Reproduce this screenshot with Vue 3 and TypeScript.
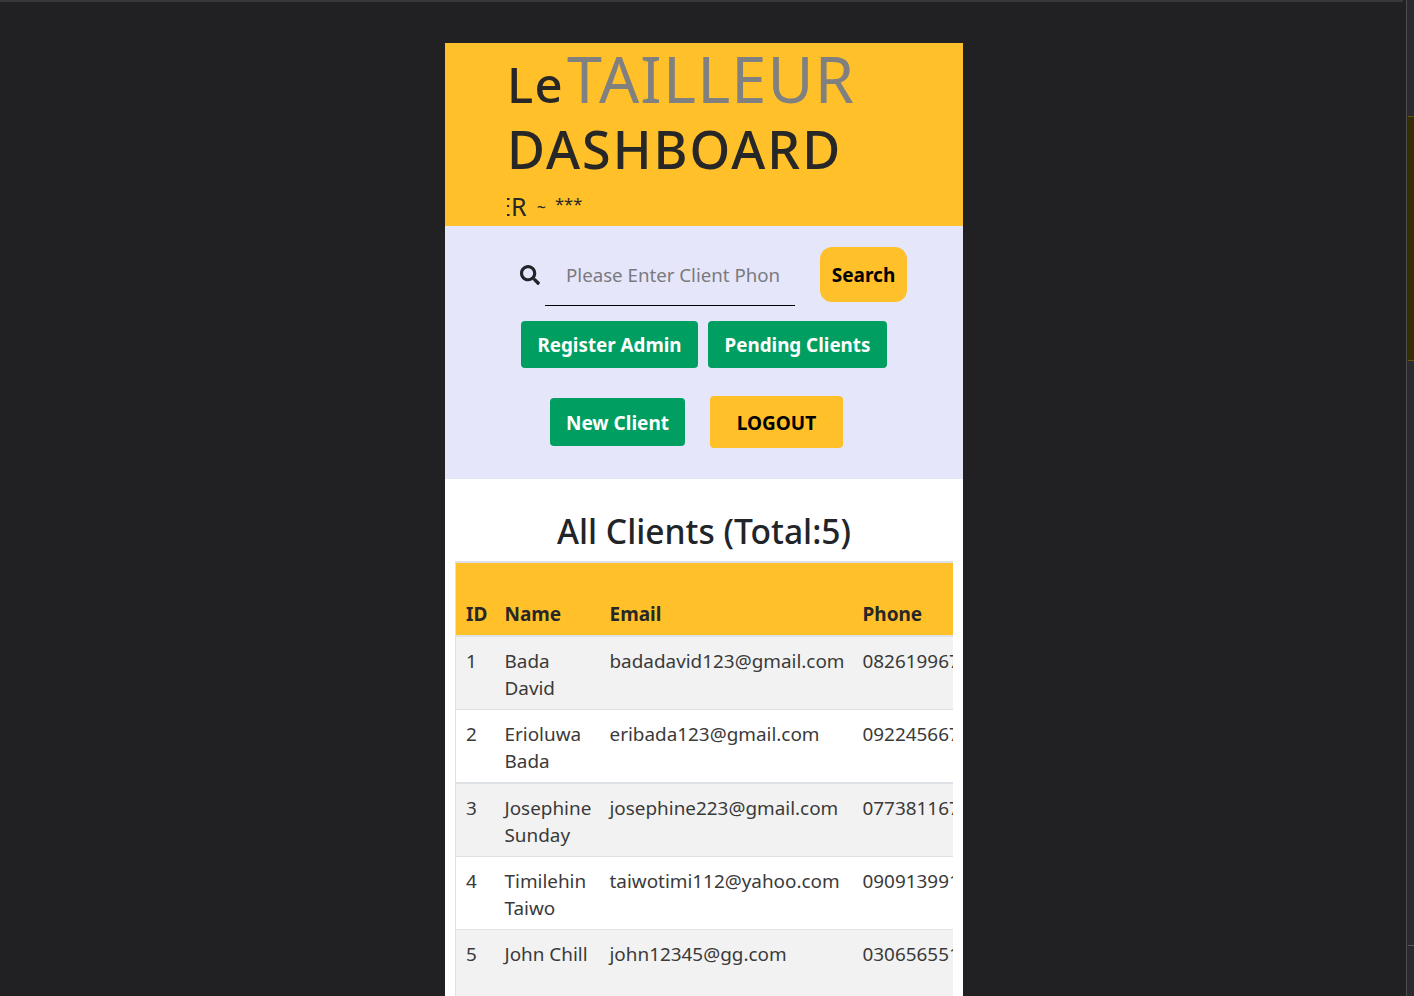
<script setup lang="ts">
type Client = {
  id: number
  first: string
  last: string
  email: string
  phone: string
}

const clients: Client[] = [
  { id: 1, first: 'Bada', last: 'David', email: 'badadavid123@gmail.com', phone: '08261996712' },
  { id: 2, first: 'Erioluwa', last: 'Bada', email: 'eribada123@gmail.com', phone: '09224566712' },
  { id: 3, first: 'Josephine', last: 'Sunday', email: 'josephine223@gmail.com', phone: '07738116712' },
  { id: 4, first: 'Timilehin', last: 'Taiwo', email: 'taiwotimi112@yahoo.com', phone: '09091399112' },
  { id: 5, first: 'John Chill', last: '', email: 'john12345@gg.com', phone: '03065655112' }
]
</script>

<template>
  <div class="page">
    <div class="topline"></div>
    <div class="rail">
      <div class="rail-mark"></div>
      <div class="rail-tick"></div>
    </div>
    <main class="panel">
      <header class="brand">
        <h1 class="logo"><span class="le">Le</span><span class="tailleur">TAILLEUR</span></h1>
        <h2 class="dash">DASHBOARD</h2>
        <div class="ticker"><span class="er">ER</span> <span class="tilde">~</span> <span class="stars">***</span></div>
      </header>

      <section class="actions">
        <div class="search-row">
          <svg class="search-icon" viewBox="0 0 512 512" aria-hidden="true">
            <path d="M505 442.7L405.3 343c-4.5-4.5-10.6-7-17-7H372c27.6-35.3 44-79.7 44-128C416 93.1 322.9 0 208 0S0 93.1 0 208s93.1 208 208 208c48.3 0 92.7-16.4 128-44v16.3c0 6.4 2.5 12.5 7 17l99.7 99.7c9.4 9.4 24.6 9.4 33.9 0l28.3-28.3c9.4-9.4 9.4-24.6.1-34zM208 336c-70.7 0-128-57.2-128-128 0-70.7 57.2-128 128-128 70.7 0 128 57.2 128 128 0 70.7-57.2 128-128 128z" />
          </svg>
          <input class="search-input" type="text" placeholder="Please Enter Client Phone Number" />
          <button class="search-btn" type="button">Search</button>
        </div>
        <div class="btn-row">
          <button class="btn green reg" type="button">Register Admin</button>
          <button class="btn green pend" type="button">Pending Clients</button>
        </div>
        <div class="btn-row last">
          <button class="btn green new" type="button">New Client</button>
          <button class="btn gold logout" type="button">LOGOUT</button>
        </div>
      </section>

      <section class="clients">
        <h3 class="title">All Clients (Total:5)</h3>
        <div class="table-wrap">
          <table class="table">
            <colgroup>
              <col class="c-id" />
              <col class="c-name" />
              <col class="c-email" />
              <col class="c-phone" />
            </colgroup>
            <thead>
              <tr>
                <th>ID</th>
                <th>Name</th>
                <th>Email</th>
                <th>Phone</th>
              </tr>
            </thead>
            <tbody>
              <tr v-for="c in clients" :key="c.id">
                <td>{{ c.id }}</td>
                <td>{{ c.first }}<br v-if="c.last" />{{ c.last }}</td>
                <td>{{ c.email }}</td>
                <td>{{ c.phone }}</td>
              </tr>
            </tbody>
          </table>
        </div>
      </section>
    </main>
  </div>
</template>

<style>
html,
body {
  margin: 0;
  height: 100%;
  overflow: hidden;
  background: #212123;
}
</style>

<style scoped>
.page {
  position: relative;
  height: 996px;
  overflow: hidden;
  background: #212123;
  font-family: "Noto Sans", "Open Sans", sans-serif;
  color: #212529;
}

.topline {
  height: 2px;
  width: 1403px;
  background: #38393b;
}

.rail {
  position: absolute;
  top: 0;
  right: 0;
  width: 7px;
  height: 996px;
  background: #2a2b2f;
  border-left: 1px solid #4a4b4d;
}

.rail-mark {
  position: absolute;
  top: 116px;
  left: 1px;
  right: 0;
  height: 245px;
  background: #352d05;
  border-top: 1px solid #665410;
  border-bottom: 1px solid #665410;
  box-sizing: border-box;
}

.rail-tick {
  position: absolute;
  top: 945px;
  left: 1px;
  right: 0;
  height: 1px;
  background: #55565a;
}

.panel {
  width: 518px;
  margin: 41px 0 0 445px;
  background: #fff;
}

.brand {
  height: 183px;
  box-sizing: border-box;
  padding-left: 62px;
  background: #ffc02a;
  overflow: hidden;
  color: #272727;
}

.logo {
  margin: 0;
  height: 70px;
  display: flex;
  align-items: baseline;
  font-weight: 500;
  white-space: nowrap;
}

.le {
  font-size: 49px;
  line-height: 72px;
  letter-spacing: 1.4px;
  margin-right: 3px;
}

.tailleur {
  font-size: 63px;
  line-height: 72px;
  font-weight: 400;
  letter-spacing: 1.2px;
  color: #808080;
}

.dash {
  margin: 0;
  height: 80px;
  font-size: 52px;
  line-height: 72px;
  font-weight: 500;
  letter-spacing: 2px;
}

.ticker {
  width: 90px;
  overflow: hidden;
  line-height: 26px;
  white-space: nowrap;
}

.er {
  display: inline-block;
  margin-left: -10px;
  font-size: 25px;
}

.tilde {
  display: inline-block;
  margin-left: 6px;
  font-size: 16px;
  transform: translateY(-3px);
}

.stars {
  display: inline-block;
  margin-left: 5px;
  font-size: 16.5px;
  transform: translateY(-6px);
}

.actions {
  height: 253px;
  box-sizing: border-box;
  padding-top: 21px;
  background: #e6e6fa;
}

.search-row {
  display: flex;
  align-items: flex-start;
  padding-left: 75px;
}

.search-icon {
  width: 20px;
  height: 20px;
  margin-top: 18px;
  fill: #212529;
}

.search-input {
  width: 250px;
  height: 59px;
  box-sizing: border-box;
  margin-left: 5px;
  padding: 0 15px 4px 21px;
  border: 0;
  border-bottom: 1px solid #000;
  background: transparent;
  font: 400 18.7px "Noto Sans", sans-serif;
  color: #212529;
  outline: none;
}

.search-input::placeholder {
  color: #7a7a80;
  opacity: 1;
}

.search-btn {
  width: 87px;
  height: 55px;
  margin-left: 25px;
  padding: 0;
  border: 0;
  border-radius: 12px;
  background: #ffc02a;
  color: #000;
  font: 700 19px "Noto Sans", sans-serif;
}

.btn-row {
  display: flex;
  justify-content: center;
  gap: 10px;
  margin-top: 15px;
}

.btn-row.last {
  align-items: center;
  gap: 25px;
  margin-top: 28px;
  padding-right: 15px;
}

.btn {
  padding: 0;
  border: 0;
  border-radius: 4px;
  font: 700 19px "Noto Sans", sans-serif;
}

.green {
  background: #009e60;
  color: #fff;
}

.gold {
  background: #ffc02a;
  color: #000;
}

.reg {
  width: 177px;
  height: 47px;
  font-size: 18.8px;
}

.pend {
  width: 179px;
  height: 47px;
  font-size: 18.8px;
}

.new {
  width: 135px;
  height: 48px;
  padding-top: 2px;
}

.logout {
  width: 133px;
  height: 52px;
  padding-top: 2px;
}

.clients {
  padding: 0 10px;
}

.title {
  margin: 0;
  height: 82px;
  box-sizing: border-box;
  padding-top: 29px;
  text-align: center;
  font-size: 33.6px;
  line-height: 46px;
  font-weight: 500;
}

.table-wrap {
  overflow: hidden;
  width: 498px;
}

.table {
  width: 620px;
  table-layout: fixed;
  border-collapse: collapse;
  font-size: 18.9px;
  line-height: 27px;
  color: #3a3a3a;
}

.c-id { width: 39px; }
.c-name { width: 105px; }
.c-email { width: 253px; }
.c-phone { width: 223px; }

th,
td {
  padding: 11px 10px 7px;
  text-align: left;
  vertical-align: top;
  border-bottom: 1px solid #dee2e6;
  white-space: nowrap;
}

th {
  box-sizing: border-box;
  padding: 38px 10px 7px;
  background: #ffc02a;
  color: #272727;
  font-weight: 700;
  font-size: 19px;
  border-top: 2px solid #dee2e6;
  border-bottom: 2px solid #dee2e6;
}

th:first-child,
td:first-child {
  border-left: 1px solid #dee2e6;
}

tbody tr:nth-child(odd) td {
  background: #f2f2f2;
}

tbody tr:nth-child(2) td {
  border-bottom-width: 2px;
}

tbody tr:last-child td {
  height: 70px;
  border-bottom: 0;
}
</style>
